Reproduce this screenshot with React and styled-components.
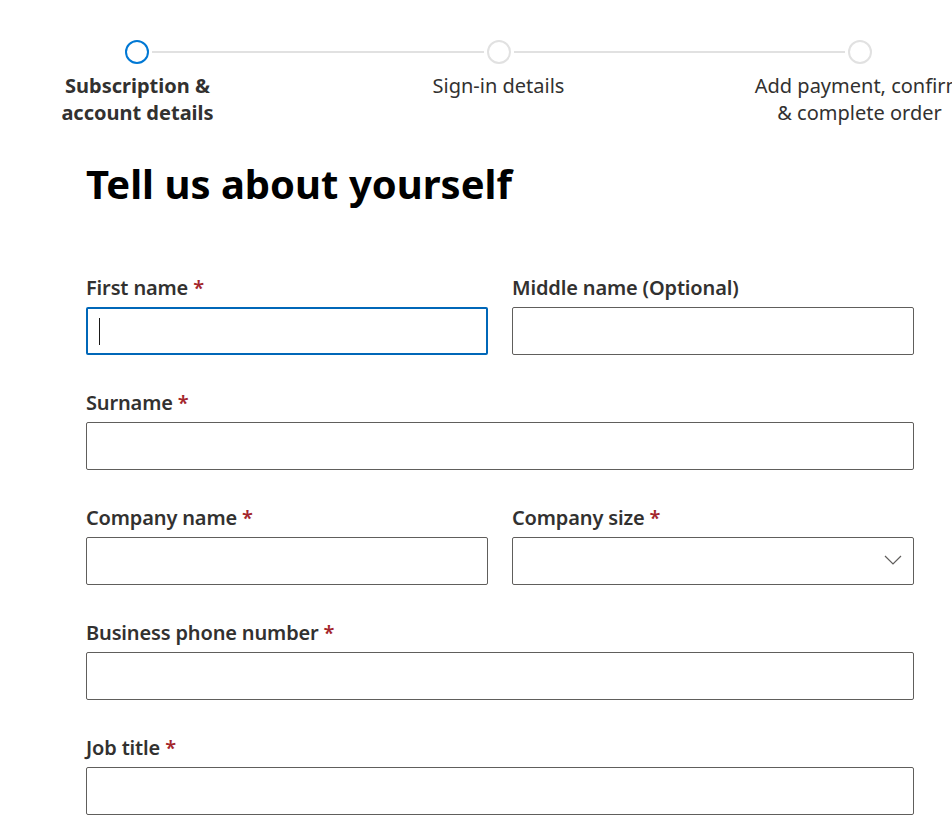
import React from "react";
import styled, { createGlobalStyle } from "styled-components";

const GlobalStyle = createGlobalStyle`
  html, body {
    margin: 0;
    padding: 0;
    background: #ffffff;
    overflow: hidden;
  }
  body {
    font-family: "Noto Sans", "Open Sans", sans-serif;
    color: #323130;
  }
  * {
    box-sizing: border-box;
  }
`;

const Page = styled.div`
  width: 952px;
  height: 826px;
  overflow: hidden;
`;

const Stepper = styled.div`
  width: 1083px;
  margin-left: -43px;
  padding-top: 40px;
`;

const Track = styled.div`
  display: flex;
  align-items: center;
  padding: 0 168px;
`;

const Circle = styled.div`
  width: 24px;
  height: 24px;
  border-radius: 50%;
  border: 2px solid ${(p) => (p.$active ? "#0078d4" : "#e1e1e1")};
  flex: none;
`;

const Line = styled.div`
  flex: 1;
  height: 2px;
  margin: 0 3px;
  background: #e1e1e1;
`;

const StepLabels = styled.div`
  display: grid;
  grid-template-columns: repeat(3, 361px);
  margin-top: 8px;
`;

const StepLabel = styled.div`
  text-align: center;
  font-size: 20px;
  line-height: 27px;
  font-weight: ${(p) => (p.$active ? 700 : 400)};
  color: #323130;
  white-space: nowrap;
`;

const Form = styled.form`
  width: 828px;
  margin-left: 86px;
`;

const Heading = styled.h1`
  margin: 31px 0 64px;
  font-size: 40px;
  line-height: 54px;
  font-weight: 700;
  color: #000000;
`;

const Row = styled.div`
  display: grid;
  grid-template-columns: ${(p) => (p.$split ? "402px 402px" : "1fr")};
  column-gap: 24px;
  margin-bottom: 35px;
`;

const Field = styled.div`
  display: flex;
  flex-direction: column;
`;

const Label = styled.label`
  font-size: 20px;
  line-height: 26px;
  font-weight: 600;
  letter-spacing: -0.15px;
  color: #323130;
  margin-bottom: 6px;
`;

const Required = styled.span`
  color: #a4262c;
  margin-left: 5px;
`;

const InputBox = styled.div`
  position: relative;
  height: 48px;
`;

const Input = styled.input`
  width: 100%;
  height: 48px;
  padding: 0 12px;
  border: ${(p) => (p.$focused ? "2px solid #0067b8" : "1px solid #605e5c")};
  border-radius: 2px;
  font: inherit;
  font-size: 18px;
  color: #323130;
  background: #ffffff;
  outline: none;
  appearance: none;
`;

const Caret = styled.span`
  position: absolute;
  left: 13px;
  top: 11px;
  width: 1px;
  height: 27px;
  background: #1b1a19;
`;

const Chevron = styled.svg`
  position: absolute;
  right: 12px;
  top: 18px;
  pointer-events: none;
`;

const steps = [
  { label: ["Subscription &", "account details"], active: true },
  { label: ["Sign-in details"] },
  { label: ["Add payment, confirm", "& complete order"] },
];

const TextField = ({ label, required, focused }) => (
  <Field>
    <Label>
      {label}
      {required && <Required>*</Required>}
    </Label>
    <InputBox>
      <Input type="text" $focused={focused} />
      {focused && <Caret />}
    </InputBox>
  </Field>
);

const SelectField = ({ label, required }) => (
  <Field>
    <Label>
      {label}
      {required && <Required>*</Required>}
    </Label>
    <InputBox>
      <Input as="div" />
      <Chevron width="18" height="10" viewBox="0 0 18 10">
        <polyline points="1,1 9,9 17,1" fill="none" stroke="#605e5c" strokeWidth="1.2" />
      </Chevron>
    </InputBox>
  </Field>
);

export default function App() {
  return (
    <Page>
      <GlobalStyle />
      <Stepper>
        <Track>
          <Circle $active />
          <Line />
          <Circle />
          <Line />
          <Circle />
        </Track>
        <StepLabels>
          {steps.map((s, i) => (
            <StepLabel key={i} $active={s.active}>
              {s.label.map((l, j) => (
                <div key={j}>{l}</div>
              ))}
            </StepLabel>
          ))}
        </StepLabels>
      </Stepper>
      <Form onSubmit={(e) => e.preventDefault()}>
        <Heading>Tell us about yourself</Heading>
        <Row $split>
          <TextField label="First name" required focused />
          <TextField label="Middle name (Optional)" />
        </Row>
        <Row>
          <TextField label="Surname" required />
        </Row>
        <Row $split>
          <TextField label="Company name" required />
          <SelectField label="Company size" required />
        </Row>
        <Row>
          <TextField label="Business phone number" required />
        </Row>
        <Row>
          <TextField label="Job title" required />
        </Row>
      </Form>
    </Page>
  );
}
